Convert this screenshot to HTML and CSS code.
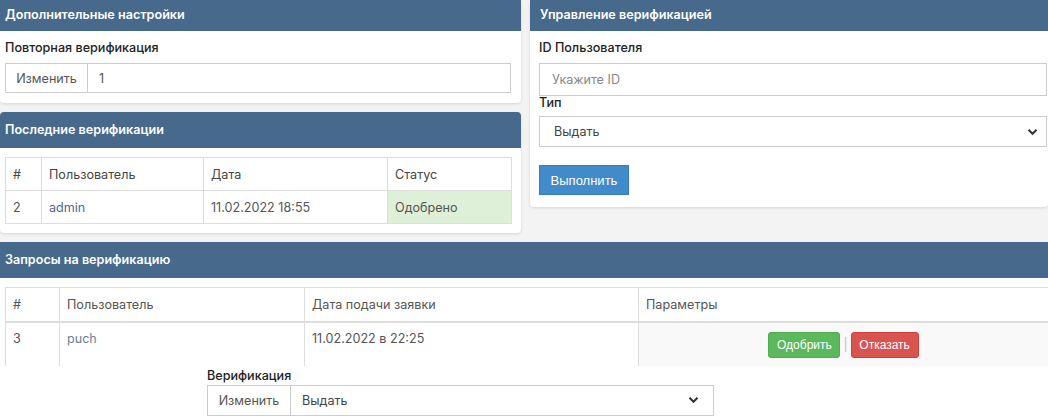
FILE: index.html
```html
<!DOCTYPE html>
<html lang="ru">
<head>
<meta charset="utf-8">
<title>Верификация</title>
<link rel="stylesheet" href="styles.css">
</head>
<body>
<div class="page">
  <div class="top">
    <div class="left-col">
      <section class="panel">
        <div class="panel-head short">Дополнительные настройки</div>
        <div class="panel-body p1">
          <div class="label">Повторная верификация</div>
          <div class="input-group">
            <span class="addon">Изменить</span>
            <span class="ig-value">1</span>
          </div>
        </div>
      </section>
      <section class="panel">
        <div class="panel-head">Последние верификации</div>
        <div class="panel-body p2">
          <table class="tbl small">
            <colgroup><col class="c1"><col class="c2"><col class="c3"><col class="c4"></colgroup>
            <tr class="thead"><td>#</td><td>Пользователь</td><td>Дата</td><td>Статус</td></tr>
            <tr><td>2</td><td><span class="link">admin</span></td><td>11.02.2022 18:55</td><td class="success">Одобрено</td></tr>
          </table>
        </div>
      </section>
    </div>
    <section class="panel right">
      <div class="panel-head short">Управление верификацией</div>
      <div class="panel-body p3">
        <div class="label">ID Пользователя</div>
        <div class="input placeholder">Укажите ID</div>
        <div class="label lt">Тип</div>
        <div class="select">
          <span>Выдать</span>
          <svg width="11" height="8" viewBox="0 0 11 8"><path d="M1.5 1.8 L5.5 5.8 L9.5 1.8" fill="none" stroke="#333" stroke-width="2"/></svg>
        </div>
        <button class="btn-primary">Выполнить</button>
      </div>
    </section>
  </div>
  <section class="panel wide">
    <div class="panel-head">Запросы на верификацию</div>
    <div class="panel-body p4">
      <table class="tbl big">
        <colgroup><col class="d1"><col class="d2"><col class="d3"><col class="d4"></colgroup>
        <tr class="thead"><td>#</td><td>Пользователь</td><td>Дата подачи заявки</td><td>Параметры</td></tr>
        <tr class="last"><td>3</td><td><span class="link2">puch</span></td><td>11.02.2022 в 22:25</td><td class="actions"><span class="btn green">Одобрить</span><span class="sep">|</span><span class="btn red">Отказать</span></td></tr>
      </table>
      <div class="verify">
        <div class="label">Верификация</div>
        <div class="input-group ig2">
          <span class="addon a2">Изменить</span>
          <div class="select inner">
            <span>Выдать</span>
            <svg width="11" height="8" viewBox="0 0 11 8"><path d="M1.5 1.8 L5.5 5.8 L9.5 1.8" fill="none" stroke="#333" stroke-width="2"/></svg>
          </div>
        </div>
      </div>
    </div>
  </section>
</div>
</body>
</html>
```

FILE: styles.css
```css
* { box-sizing: border-box; }
html, body { margin: 0; padding: 0; }
body {
  background: #f3f3f3;
  font-family: Inter, "Noto Sans", sans-serif;
  font-size: 12.6px;
  color: #333;
  width: 1048px;
  height: 420px;
  overflow: hidden;
}
.page { display: flex; flex-direction: column; gap: 9px; }
.top { display: flex; gap: 9px; align-items: flex-start; }
.left-col { width: 521px; display: flex; flex-direction: column; gap: 9px; }
.panel {
  background: #fff;
  border-radius: 4px;
  box-shadow: 0 1px 3px rgba(0,0,0,0.12);
}
.panel.right { width: 518px; border-top-right-radius: 0; }
.panel.wide { width: 1048px; border-radius: 0; box-shadow: none; background: #fff; }
.panel-head {
  background: #46698c;
  color: #fff;
  font-weight: 600;
  height: 36px;
  line-height: 36px;
  padding-left: 5px;
  border-radius: 4px 4px 0 0;
}
.panel-head.short { height: 31px; line-height: 30px; border-radius: 0; }
.right .panel-head { padding-left: 10px; }
.wide .panel-head { border-radius: 0; }
.panel-body { padding: 8px 10px 10px 5px; }
.label { font-weight: 500; line-height: 18px; margin-bottom: 6px; color: #222; }
.input-group {
  display: flex;
  height: 30px;
  border: 1px solid #ccc;
  background: #fff;
}
.addon {
  width: 82px;
  border-right: 1px solid #ccc;
  display: flex;
  align-items: center;
  justify-content: center;
  color: #555;
}
.ig-value { display: flex; align-items: center; padding-left: 11px; color: #555; }
.p2 { padding: 9px 10px 9px 5px; }
.tbl { border-collapse: collapse; table-layout: fixed; }
.tbl td {
  border: 1px solid #ddd;
  padding: 0 7px;
  text-align: left;
  color: #555;
}
.tbl.small { width: 506px; }
.tbl.small td { height: 33px; }
.tbl.small .thead td { color: #444; }
.c1 { width: 36px; } .c2 { width: 162px; } .c3 { width: 184px; } .c4 { width: 124px; }
.tbl .success { background: #dff0d8; }
.link { color: #50698a; }
.link2 { color: #6d7f93; }
.p3 { padding: 8px 0 12px 9px; }
.input {
  height: 33px;
  border: 1px solid #ccc;
  display: flex;
  align-items: center;
  padding-left: 12px;
  width: 508px;
}
.placeholder { color: #888; }
.label.lt { margin-top: 0; line-height: 14px; margin-bottom: 6px; }
.select {
  height: 31px;
  border: 1px solid #ccc;
  width: 508px;
  display: flex;
  align-items: center;
  justify-content: space-between;
  padding: 0 8px 0 14px;
  color: #444;
  background: #fff;
}
.btn-primary {
  margin-top: 18px;
  display: block;
  width: 90px;
  height: 30px;
  background: #428bca;
  border: 1px solid #357ebd;
  color: #fff;
  font-family: "Liberation Sans", Arial, sans-serif;
  font-size: 13px;
  padding: 0;
  border-radius: 0;
}
.p4 { padding: 9px 0 20px 5px; }
.tbl.big { width: 1043px; }
.d1 { width: 54px; } .d2 { width: 245px; } .d3 { width: 334px; } .d4 { width: 410px; }
.tbl.big .thead td { height: 34px; border-bottom: 2px solid #ddd; color: #555; }
.tbl.big tr.last td { height: 44px; vertical-align: top; padding-top: 8px; border-bottom: none; }
.tbl.big tr.last td.actions {
  background: #f9f9f9;
  text-align: center;
  padding-top: 9px;
}
.btn {
  display: inline-block;
  height: 26px;
  border-radius: 3px;
  color: #fff;
  font-family: "Liberation Sans", Arial, sans-serif;
  font-size: 12px;
  padding: 0;
  text-align: center;
  vertical-align: top;
}
.green { background: #5cb85c; border: 1px solid #4cae4c; line-height: 24px; width: 72px; }
.red { background: #d9534f; border: 1px solid #d43f3a; line-height: 24px; width: 68px; }
.sep { display: inline-block; color: #bbb; margin: 0 3px; line-height: 26px; vertical-align: top; }
.verify { margin-left: 202px; padding-top: 1px; width: 507px; }
.verify .label { margin-bottom: 0; }
.ig2 { height: 31px; }
.a2 { width: 83px; }
.select.inner { border: none; width: auto; flex: 1; padding-left: 11px; padding-right: 14px; height: 29px; }
```
